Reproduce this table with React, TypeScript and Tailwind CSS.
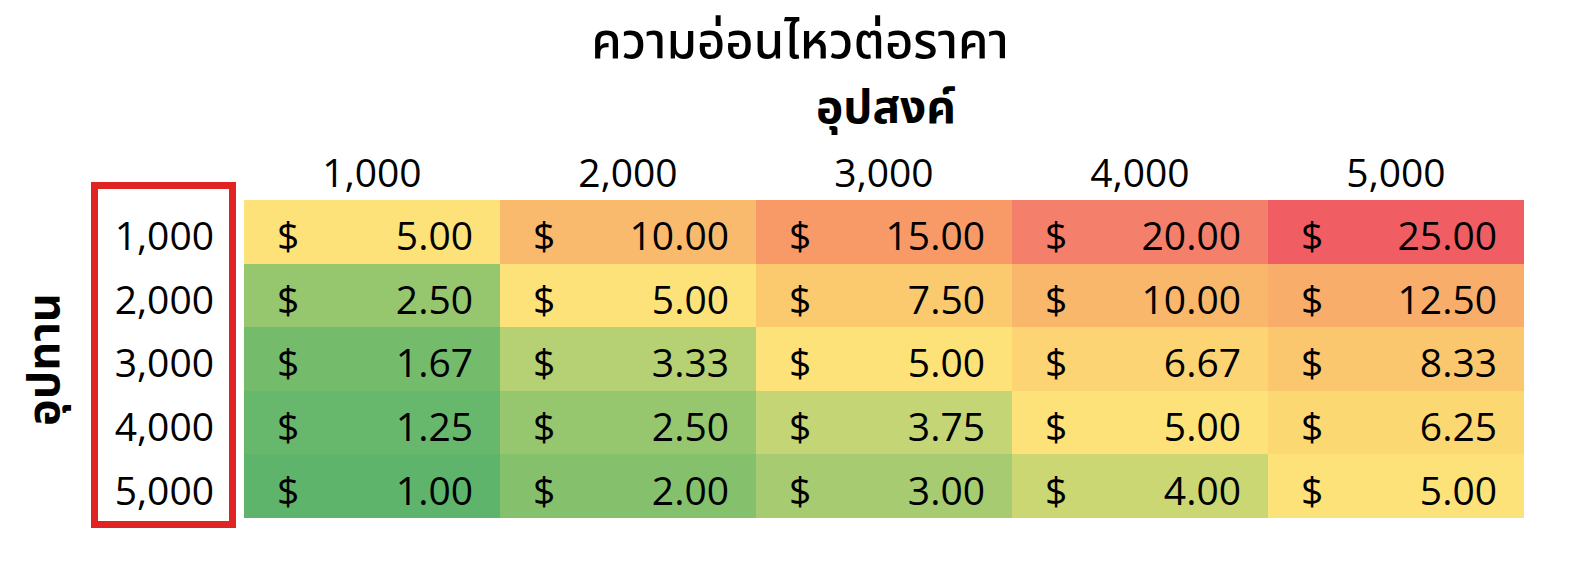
const cols = ['1,000', '2,000', '3,000', '4,000', '5,000']

const rows: { label: string; cells: { v: string; bg: string }[] }[] = [
  {
    label: '1,000',
    cells: [
      { v: '5.00', bg: 'bg-[#fde27a]' },
      { v: '10.00', bg: 'bg-[#f9ba6e]' },
      { v: '15.00', bg: 'bg-[#f79a68]' },
      { v: '20.00', bg: 'bg-[#f47f6b]' },
      { v: '25.00', bg: 'bg-[#f05e63]' },
    ],
  },
  {
    label: '2,000',
    cells: [
      { v: '2.50', bg: 'bg-[#96c66e]' },
      { v: '5.00', bg: 'bg-[#fde27a]' },
      { v: '7.50', bg: 'bg-[#fbc96e]' },
      { v: '10.00', bg: 'bg-[#f9b76c]' },
      { v: '12.50', bg: 'bg-[#f8ad6b]' },
    ],
  },
  {
    label: '3,000',
    cells: [
      { v: '1.67', bg: 'bg-[#74bb6c]' },
      { v: '3.33', bg: 'bg-[#b6d174]' },
      { v: '5.00', bg: 'bg-[#fde27a]' },
      { v: '6.67', bg: 'bg-[#fcd473]' },
      { v: '8.33', bg: 'bg-[#fbc76e]' },
    ],
  },
  {
    label: '4,000',
    cells: [
      { v: '1.25', bg: 'bg-[#67b86c]' },
      { v: '2.50', bg: 'bg-[#96c66e]' },
      { v: '3.75', bg: 'bg-[#c4d576]' },
      { v: '5.00', bg: 'bg-[#fde27a]' },
      { v: '6.25', bg: 'bg-[#fcd873]' },
    ],
  },
  {
    label: '5,000',
    cells: [
      { v: '1.00', bg: 'bg-[#5eb46b]' },
      { v: '2.00', bg: 'bg-[#85c06d]' },
      { v: '3.00', bg: 'bg-[#a6cb70]' },
      { v: '4.00', bg: 'bg-[#cbd772]' },
      { v: '5.00', bg: 'bg-[#fde27a]' },
    ],
  },
]

const num = "font-['Open_Sans','Liberation_Sans',sans-serif] text-[39px] leading-none text-black"
const thai = "font-['Noto_Sans_Thai','Noto_Sans','DejaVu_Sans',sans-serif] text-black"

export default function App() {
  return (
    <div className="w-[1576px] h-[564px] bg-white overflow-hidden">
      {/* titles */}
      <div className={['h-[68px] flex items-end justify-center pl-[24px]', thai].join(' ')}>
        <h1 className="text-[49px] leading-none font-medium">ความอ่อนไหวต่อราคา</h1>
      </div>
      <div className={['h-[64px] flex items-end justify-center pl-[196px]', thai].join(' ')}>
        <h2 className="text-[46px] leading-none font-bold">อุปสงค์</h2>
      </div>

      {/* column headers */}
      <div className="flex pl-[244px] h-[68px] items-center">
        {cols.map(c => (
          <div key={c} className={['w-[256px] text-center pt-[10px]', num].join(' ')}>{c}</div>
        ))}
      </div>

      {/* body */}
      <div className="flex">
        <div className="w-[91px] h-[318px] flex items-center justify-center">
          <span className={['-rotate-90 whitespace-nowrap text-[45px] leading-none font-bold', thai].join(' ')}>อุปทาน</span>
        </div>

        <div className="relative w-[145px] mr-[8px]">
          <div className="absolute -top-[18px] -bottom-[10px] inset-x-0 border-[7px] border-[#e02424]" />
          {rows.map(r => (
            <div key={r.label} className={['h-[63.6px] flex items-center justify-end pr-[22px] pt-[6px]', num].join(' ')}>
              {r.label}
            </div>
          ))}
        </div>

        <div className="w-[1280px]">
          {rows.map(r => (
            <div key={r.label} className="flex h-[63.6px]">
              {r.cells.map((c, i) => (
                <div key={i} className={['w-[256px] flex items-center justify-between pl-[33px] pr-[27px] pt-[6px]', c.bg, num].join(' ')}>
                  <span>$</span>
                  <span>{c.v}</span>
                </div>
              ))}
            </div>
          ))}
        </div>
      </div>
    </div>
  )
}
